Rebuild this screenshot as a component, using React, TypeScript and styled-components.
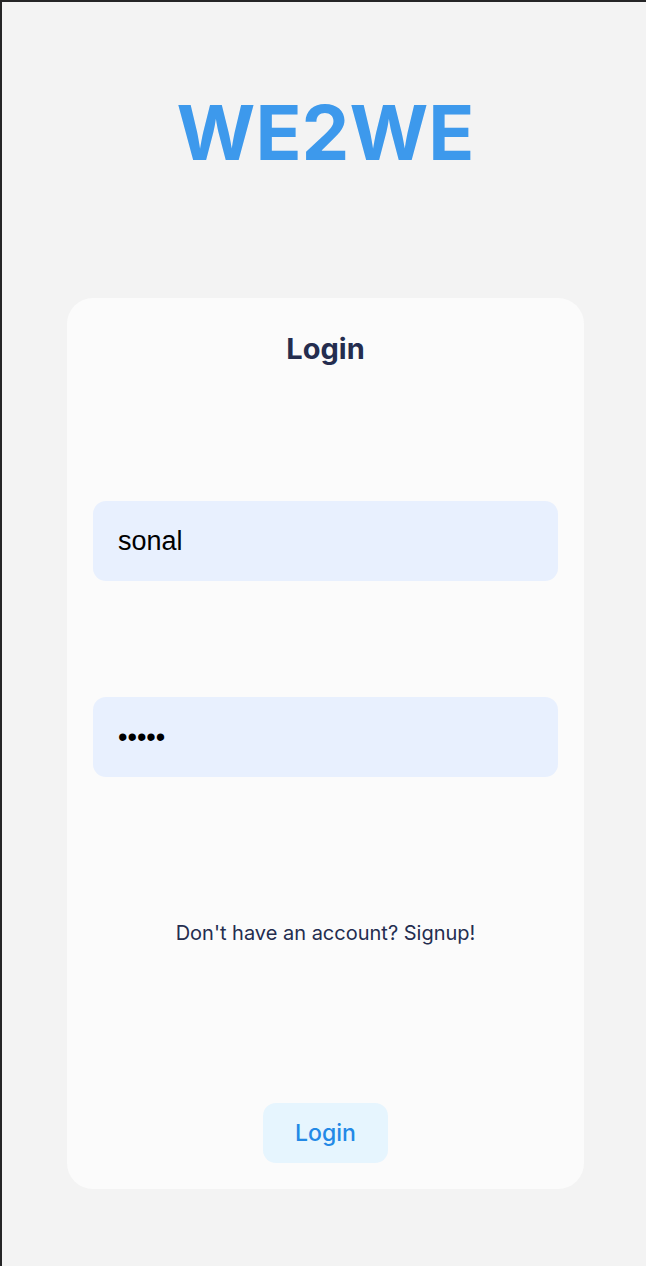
import React from "react";
import styled, { createGlobalStyle } from "styled-components";

const GlobalStyle = createGlobalStyle`
  *, *::before, *::after { box-sizing: border-box; }
  body { margin: 0; background: #f3f3f3; }
`;

const Page = styled.main`
  min-height: 100vh;
  display: flex;
  flex-direction: column;
  align-items: center;
  padding: 80px 62px 76px 65px;
  border-top: 2px solid #252526;
  border-left: 2px solid #252526;
  background: #f3f3f3;
  color: #242d4f;
  font-family: Inter, "Liberation Sans", sans-serif;
`;

const Brand = styled.h1`
  margin: 0 0 116px;
  color: #3d99ec;
  font-size: 76px;
  line-height: 100px;
  font-weight: 700;
`;

const Card = styled.form`
  width: 100%;
  max-width: 520px;
  display: flex;
  flex-direction: column;
  align-items: center;
  padding: 32px 26px 26px;
  border-radius: 26px;
  background: #fbfbfb;
`;

const Title = styled.h2`
  margin: 0 0 133px;
  font-size: 29px;
  line-height: 38px;
  font-weight: 700;
`;

const Field = styled.input`
  width: 100%;
  height: 80px;
  margin-bottom: 116px;
  padding: 0 25px;
  border: 0;
  border-radius: 13px;
  outline: none;
  background: #e8f0fe;
  color: #000;
  font: 27px "Liberation Sans", Arial, sans-serif;
`;

const SignupLink = styled.a`
  margin: 28px 0 158px;
  color: inherit;
  font-size: 20px;
  line-height: 24px;
  text-decoration: none;
`;

const SubmitButton = styled.button`
  height: 60px;
  padding: 0 32px;
  border: 0;
  border-radius: 13px;
  background: #e6f5fe;
  color: #2389e6;
  font-family: inherit;
  font-size: 23px;
  font-weight: 500;
  cursor: pointer;
`;

export default function App() {
  return (
    <>
      <GlobalStyle />
      <Page>
        <Brand>WE2WE</Brand>
        <Card onSubmit={(event) => event.preventDefault()}>
          <Title>Login</Title>
          <Field type="text" aria-label="Username" defaultValue="sonal" />
          <Field type="password" aria-label="Password" defaultValue="sonal" />
          <SignupLink href="#signup">Don't have an account? Signup!</SignupLink>
          <SubmitButton type="submit">Login</SubmitButton>
        </Card>
      </Page>
    </>
  );
}
